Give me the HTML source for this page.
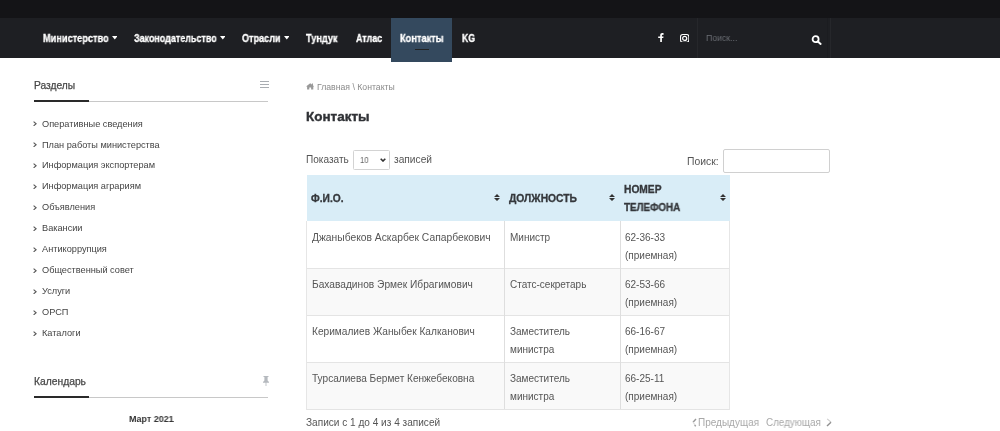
<!DOCTYPE html>
<html><head><meta charset="utf-8">
<style>
html,body{margin:0;padding:0;background:#fff;width:1000px;height:431px;overflow:hidden;position:relative;font-family:"Liberation Sans",sans-serif;}
.r{position:absolute;}
.t{position:absolute;white-space:nowrap;transform-origin:0 0;will-change:transform;}
</style></head><body>
<div class="r" style="left:0px;top:0px;width:1000px;height:18px;background:#141417;"></div>
<div class="r" style="left:0px;top:18px;width:1000px;height:40px;background:#1e1f23;"></div>
<div class="r" style="left:391px;top:18px;width:61px;height:44px;background:#34495e;"></div>
<div class="r" style="left:415px;top:49px;width:14px;height:1px;background:#222;"></div>
<div class="r" style="left:697px;top:18px;width:1px;height:40px;background:#26272b;"></div>
<div class="r" style="left:830px;top:18px;width:1px;height:40px;background:#26272b;"></div>
<div class="t" style="transform:scaleX(0.9203);left:42.90px;top:33.83px;font-size:10px;line-height:10px;color:#fff;font-weight:700;-webkit-text-stroke:0.3px #fff;">Министерство</div>
<svg class="r" style="left:111.6px;top:36.3px" width="5.6" height="3.4" viewBox="0 0 5.6 3.4"><path d="M0 0 H5.6 L2.8 3.4 Z" fill="#fff"/></svg>
<div class="t" style="transform:scaleX(0.8951);left:134.00px;top:33.83px;font-size:10px;line-height:10px;color:#fff;font-weight:700;-webkit-text-stroke:0.3px #fff;">Законодательство</div>
<svg class="r" style="left:219.6px;top:36.3px" width="5.6" height="3.4" viewBox="0 0 5.6 3.4"><path d="M0 0 H5.6 L2.8 3.4 Z" fill="#fff"/></svg>
<div class="t" style="transform:scaleX(0.9076);left:242.00px;top:33.83px;font-size:10px;line-height:10px;color:#fff;font-weight:700;-webkit-text-stroke:0.3px #fff;">Отрасли</div>
<svg class="r" style="left:283.5px;top:36.3px" width="5.6" height="3.4" viewBox="0 0 5.6 3.4"><path d="M0 0 H5.6 L2.8 3.4 Z" fill="#fff"/></svg>
<div class="t" style="transform:scaleX(0.9193);left:306.20px;top:33.83px;font-size:10px;line-height:10px;color:#fff;font-weight:700;-webkit-text-stroke:0.3px #fff;">Тундук</div>
<div class="t" style="transform:scaleX(0.8929);left:356.20px;top:33.83px;font-size:10px;line-height:10px;color:#fff;font-weight:700;-webkit-text-stroke:0.3px #fff;">Атлас</div>
<div class="t" style="transform:scaleX(0.9246);left:400.20px;top:33.83px;font-size:10px;line-height:10px;color:#fff;font-weight:700;-webkit-text-stroke:0.3px #fff;">Контакты</div>
<div class="t" style="transform:scaleX(0.8667);left:461.60px;top:33.83px;font-size:10px;line-height:10px;color:#fff;font-weight:700;-webkit-text-stroke:0.3px #fff;">KG</div>
<div class="t" style="transform:scaleX(0.9645);left:706.00px;top:34.38px;font-size:9px;line-height:9px;color:#6b6e74;font-weight:400;">Поиск...</div>
<div class="t" style="transform:scaleX(1.0236);left:33.50px;top:80.63px;font-size:10px;line-height:10px;color:#484848;font-weight:400;-webkit-text-stroke:0.25px #484848;">Разделы</div>
<div class="r" style="left:34px;top:100px;width:55px;height:2px;background:#2a2a2a;"></div>
<div class="r" style="left:89px;top:101px;width:179px;height:1px;background:#c8c8c8;"></div>
<div class="r" style="left:260px;top:81.0px;width:9px;height:1.4px;background:#a9adb2;"></div>
<div class="r" style="left:260px;top:84.0px;width:9px;height:1.4px;background:#a9adb2;"></div>
<div class="r" style="left:260px;top:87.0px;width:9px;height:1.4px;background:#a9adb2;"></div>
<div class="t" style="left:41.50px;top:119.51px;font-size:9.2px;line-height:9.2px;color:#444;font-weight:400;">Оперативные сведения</div>
<svg class="r" style="left:33.4px;top:120.80px" width="4" height="5.5" viewBox="0 0 4 5.5"><path d="M0.6 0.6 L3.1 2.75 L0.6 4.9" fill="none" stroke="#555" stroke-width="1.1"/></svg>
<div class="t" style="left:41.50px;top:140.50px;font-size:9.2px;line-height:9.2px;color:#444;font-weight:400;">План работы министерства</div>
<svg class="r" style="left:33.4px;top:141.79px" width="4" height="5.5" viewBox="0 0 4 5.5"><path d="M0.6 0.6 L3.1 2.75 L0.6 4.9" fill="none" stroke="#555" stroke-width="1.1"/></svg>
<div class="t" style="left:41.50px;top:161.49px;font-size:9.2px;line-height:9.2px;color:#444;font-weight:400;">Информация экспортерам</div>
<svg class="r" style="left:33.4px;top:162.78px" width="4" height="5.5" viewBox="0 0 4 5.5"><path d="M0.6 0.6 L3.1 2.75 L0.6 4.9" fill="none" stroke="#555" stroke-width="1.1"/></svg>
<div class="t" style="left:41.50px;top:182.48px;font-size:9.2px;line-height:9.2px;color:#444;font-weight:400;">Информация аграриям</div>
<svg class="r" style="left:33.4px;top:183.77px" width="4" height="5.5" viewBox="0 0 4 5.5"><path d="M0.6 0.6 L3.1 2.75 L0.6 4.9" fill="none" stroke="#555" stroke-width="1.1"/></svg>
<div class="t" style="left:41.50px;top:203.47px;font-size:9.2px;line-height:9.2px;color:#444;font-weight:400;">Объявления</div>
<svg class="r" style="left:33.4px;top:204.76px" width="4" height="5.5" viewBox="0 0 4 5.5"><path d="M0.6 0.6 L3.1 2.75 L0.6 4.9" fill="none" stroke="#555" stroke-width="1.1"/></svg>
<div class="t" style="left:41.50px;top:224.46px;font-size:9.2px;line-height:9.2px;color:#444;font-weight:400;">Вакансии</div>
<svg class="r" style="left:33.4px;top:225.75px" width="4" height="5.5" viewBox="0 0 4 5.5"><path d="M0.6 0.6 L3.1 2.75 L0.6 4.9" fill="none" stroke="#555" stroke-width="1.1"/></svg>
<div class="t" style="left:41.50px;top:245.45px;font-size:9.2px;line-height:9.2px;color:#444;font-weight:400;">Антикоррупция</div>
<svg class="r" style="left:33.4px;top:246.74px" width="4" height="5.5" viewBox="0 0 4 5.5"><path d="M0.6 0.6 L3.1 2.75 L0.6 4.9" fill="none" stroke="#555" stroke-width="1.1"/></svg>
<div class="t" style="left:41.50px;top:266.44px;font-size:9.2px;line-height:9.2px;color:#444;font-weight:400;">Общественный совет</div>
<svg class="r" style="left:33.4px;top:267.73px" width="4" height="5.5" viewBox="0 0 4 5.5"><path d="M0.6 0.6 L3.1 2.75 L0.6 4.9" fill="none" stroke="#555" stroke-width="1.1"/></svg>
<div class="t" style="left:41.50px;top:287.43px;font-size:9.2px;line-height:9.2px;color:#444;font-weight:400;">Услуги</div>
<svg class="r" style="left:33.4px;top:288.72px" width="4" height="5.5" viewBox="0 0 4 5.5"><path d="M0.6 0.6 L3.1 2.75 L0.6 4.9" fill="none" stroke="#555" stroke-width="1.1"/></svg>
<div class="t" style="left:41.50px;top:308.42px;font-size:9.2px;line-height:9.2px;color:#444;font-weight:400;">ОРСП</div>
<svg class="r" style="left:33.4px;top:309.71px" width="4" height="5.5" viewBox="0 0 4 5.5"><path d="M0.6 0.6 L3.1 2.75 L0.6 4.9" fill="none" stroke="#555" stroke-width="1.1"/></svg>
<div class="t" style="left:41.50px;top:329.41px;font-size:9.2px;line-height:9.2px;color:#444;font-weight:400;">Каталоги</div>
<svg class="r" style="left:33.4px;top:330.70px" width="4" height="5.5" viewBox="0 0 4 5.5"><path d="M0.6 0.6 L3.1 2.75 L0.6 4.9" fill="none" stroke="#555" stroke-width="1.1"/></svg>
<div class="t" style="transform:scaleX(1.0300);left:33.50px;top:377.04px;font-size:10px;line-height:10px;color:#484848;font-weight:400;-webkit-text-stroke:0.25px #484848;">Календарь</div>
<div class="r" style="left:34px;top:395.5px;width:54.5px;height:2.0px;background:#2a2a2a;"></div>
<div class="r" style="left:88.5px;top:396.5px;width:179.5px;height:1.0px;background:#c8c8c8;"></div>
<svg class="r" style="left:262px;top:376px" width="8" height="10" viewBox="0 0 8 10"><path d="M1.5 0 H6.5 V1 H5.6 V4.5 L7 6 V6.8 H4.4 V10 H3.6 V6.8 H1 V6 L2.4 4.5 V1 H1.5 Z" fill="#b5b9be"/></svg>
<div class="t" style="transform:scaleX(0.9906);left:128.50px;top:414.88px;font-size:9px;line-height:9px;color:#333;font-weight:700;">Март 2021</div>
<svg class="r" style="left:305.9px;top:83.1px" width="8.4" height="6.6" viewBox="0 0 8.4 6.6"><path d="M4.2 0.2 L8.4 3.6 H7.3 V6.6 H5.1 V4.5 H3.3 V6.6 H1.1 V3.6 H0 Z M5.9 0.6 H7 V2.4 L5.9 1.5 Z" fill="#999"/></svg>
<div class="t" style="transform:scaleX(1.0216);left:316.50px;top:82.50px;font-size:8.5px;line-height:8.5px;color:#8a8a8a;font-weight:400;">Главная \ Контакты</div>
<div class="t" style="transform:scaleX(1.1238);left:306.40px;top:110.54px;font-size:12px;line-height:12px;color:#303236;font-weight:700;-webkit-text-stroke:0.35px #303236;">Контакты</div>
<div class="t" style="transform:scaleX(1.0067);left:306.10px;top:154.73px;font-size:10px;line-height:10px;color:#555;font-weight:400;">Показать</div>
<div class="r" style="left:353px;top:149.5px;width:35px;height:18px;border:1px solid #d3d3d3;border-radius:1.5px;background:#fff;"></div>
<div class="t" style="transform:scaleX(0.9083);left:360.30px;top:156.00px;font-size:8.5px;line-height:8.5px;color:#666;font-weight:400;">10</div>
<svg class="r" style="left:380px;top:157.5px" width="6" height="4" viewBox="0 0 6 4"><path d="M0.7 0.7 L3 3 L5.3 0.7" fill="none" stroke="#333" stroke-width="1.6"/></svg>
<div class="t" style="transform:scaleX(1.0189);left:393.60px;top:154.73px;font-size:10px;line-height:10px;color:#555;font-weight:400;">записей</div>
<div class="t" style="transform:scaleX(1.0361);left:687.10px;top:156.84px;font-size:10px;line-height:10px;color:#555;font-weight:400;">Поиск:</div>
<div class="r" style="left:722.5px;top:149.3px;width:105.5px;height:22px;border:1px solid #d0d0d0;border-radius:2px;background:#fff;"></div>
<div class="r" style="left:306.5px;top:175px;width:423.5px;height:46px;background:#d9edf7;"></div>
<div class="t" style="transform:scaleX(1.0206);left:311.30px;top:194.03px;font-size:10px;line-height:10px;color:#35383c;font-weight:700;-webkit-text-stroke:0.3px #35383c;">Ф.И.О.</div>
<div class="t" style="transform:scaleX(1.0305);left:508.90px;top:194.03px;font-size:10px;line-height:10px;color:#35383c;font-weight:700;-webkit-text-stroke:0.3px #35383c;">ДОЛЖНОСТЬ</div>
<div class="t" style="transform:scaleX(1.0226);left:624.10px;top:185.03px;font-size:10px;line-height:10px;color:#35383c;font-weight:700;-webkit-text-stroke:0.3px #35383c;">НОМЕР</div>
<div class="t" style="transform:scaleX(0.9837);left:624.10px;top:203.03px;font-size:10px;line-height:10px;color:#35383c;font-weight:700;-webkit-text-stroke:0.3px #35383c;">ТЕЛЕФОНА</div>
<svg class="r" style="left:494px;top:194.3px" width="6" height="7" viewBox="0 0 6 7"><path d="M0 3 L3 0 L6 3 Z M0 4 L3 7 L6 4 Z" fill="#333"/></svg>
<svg class="r" style="left:609px;top:194.3px" width="6" height="7" viewBox="0 0 6 7"><path d="M0 3 L3 0 L6 3 Z M0 4 L3 7 L6 4 Z" fill="#333"/></svg>
<svg class="r" style="left:719.5px;top:194.3px" width="6" height="7" viewBox="0 0 6 7"><path d="M0 3 L3 0 L6 3 Z M0 4 L3 7 L6 4 Z" fill="#333"/></svg>
<div class="r" style="left:306.5px;top:221px;width:423.5px;height:47px;background:#fff;"></div>
<div class="t" style="transform:scaleX(1.0291);left:312.00px;top:232.84px;font-size:10px;line-height:10px;color:#555;font-weight:400;">Джаныбеков Аскарбек Сапарбекович</div>
<div class="t" style="left:509.80px;top:232.84px;font-size:10px;line-height:10px;color:#555;font-weight:400;">Министр</div>
<div class="t" style="left:624.60px;top:232.84px;font-size:10px;line-height:10px;color:#555;font-weight:400;">62-36-33</div>
<div class="t" style="left:624.60px;top:250.84px;font-size:10px;line-height:10px;color:#555;font-weight:400;">(приемная)</div>
<div class="r" style="left:306.5px;top:268px;width:423.5px;height:47px;background:#f9f9f9;"></div>
<div class="t" style="transform:scaleX(1.0178);left:312.00px;top:279.84px;font-size:10px;line-height:10px;color:#555;font-weight:400;">Бахавадинов Эрмек Ибрагимович</div>
<div class="t" style="left:509.80px;top:279.84px;font-size:10px;line-height:10px;color:#555;font-weight:400;">Статс-секретарь</div>
<div class="t" style="left:624.60px;top:279.84px;font-size:10px;line-height:10px;color:#555;font-weight:400;">62-53-66</div>
<div class="t" style="left:624.60px;top:297.84px;font-size:10px;line-height:10px;color:#555;font-weight:400;">(приемная)</div>
<div class="r" style="left:306.5px;top:315px;width:423.5px;height:47px;background:#fff;"></div>
<div class="t" style="transform:scaleX(1.0139);left:312.00px;top:326.84px;font-size:10px;line-height:10px;color:#555;font-weight:400;">Керималиев Жаныбек Калканович</div>
<div class="t" style="left:509.80px;top:326.84px;font-size:10px;line-height:10px;color:#555;font-weight:400;">Заместитель</div>
<div class="t" style="left:509.80px;top:344.84px;font-size:10px;line-height:10px;color:#555;font-weight:400;">министра</div>
<div class="t" style="left:624.60px;top:326.84px;font-size:10px;line-height:10px;color:#555;font-weight:400;">66-16-67</div>
<div class="t" style="left:624.60px;top:344.84px;font-size:10px;line-height:10px;color:#555;font-weight:400;">(приемная)</div>
<div class="r" style="left:306.5px;top:362px;width:423.5px;height:47px;background:#f9f9f9;"></div>
<div class="t" style="transform:scaleX(1.0087);left:312.00px;top:373.84px;font-size:10px;line-height:10px;color:#555;font-weight:400;">Турсалиева Бермет Кенжебековна</div>
<div class="t" style="left:509.80px;top:373.84px;font-size:10px;line-height:10px;color:#555;font-weight:400;">Заместитель</div>
<div class="t" style="left:509.80px;top:391.84px;font-size:10px;line-height:10px;color:#555;font-weight:400;">министра</div>
<div class="t" style="left:624.60px;top:373.84px;font-size:10px;line-height:10px;color:#555;font-weight:400;">66-25-11</div>
<div class="t" style="left:624.60px;top:391.84px;font-size:10px;line-height:10px;color:#555;font-weight:400;">(приемная)</div>
<div class="r" style="left:306px;top:268px;width:424px;height:1px;background:#e4e4e4;"></div>
<div class="r" style="left:306px;top:315px;width:424px;height:1px;background:#e4e4e4;"></div>
<div class="r" style="left:306px;top:362px;width:424px;height:1px;background:#e4e4e4;"></div>
<div class="r" style="left:306px;top:409px;width:424px;height:1px;background:#e4e4e4;"></div>
<div class="r" style="left:504px;top:221px;width:1px;height:188px;background:#dedede;"></div>
<div class="r" style="left:619.5px;top:221px;width:1.0px;height:188px;background:#dedede;"></div>
<div class="r" style="left:306px;top:221px;width:1px;height:189px;background:#e6e6e6;"></div>
<div class="r" style="left:729px;top:221px;width:1px;height:189px;background:#e6e6e6;"></div>
<div class="t" style="transform:scaleX(1.0069);left:305.70px;top:417.84px;font-size:10px;line-height:10px;color:#555;font-weight:400;">Записи с 1 до 4 из 4 записей</div>
<div class="t" style="transform:scaleX(0.9974);left:698.30px;top:417.84px;font-size:10px;line-height:10px;color:#a8a8a8;font-weight:400;">Предыдущая</div>
<div class="t" style="transform:scaleX(0.9797);left:765.80px;top:417.84px;font-size:10px;line-height:10px;color:#a8a8a8;font-weight:400;">Следующая</div>
<svg class="r" style="left:691.5px;top:417.5px" width="5" height="9" viewBox="0 0 5 9"><path d="M4 1 L1 4.2" fill="none" stroke="#999" stroke-width="1.4"/><path d="M1 4.2 L3.5 7.6" fill="none" stroke="#ddd" stroke-width="1.1"/><path d="M2.6 7.2 L3.8 8.2" fill="none" stroke="#999" stroke-width="1.4"/></svg>
<svg class="r" style="left:825.5px;top:417.5px" width="6" height="9" viewBox="0 0 6 9"><path d="M1.2 0.8 L5 4.2" fill="none" stroke="#ccc" stroke-width="1.1"/><path d="M5 4.2 L1 8" fill="none" stroke="#8f8f8f" stroke-width="1.4"/></svg>
<svg class="r" style="left:658px;top:33px" width="6" height="9" viewBox="0 0 6 9"><path d="M3.9 9 V5 H5.3 L5.5 3.5 H3.9 V2.6 C3.9 2.1 4.1 1.8 4.7 1.8 H5.6 V0.2 C5.3 0.1 4.8 0 4.3 0 C3 0 2.2 0.8 2.2 2.2 V3.5 H0.2 V5 H2.2 V9 Z" fill="#fff"/></svg>
<svg class="r" style="left:680px;top:33.6px" width="9.4" height="8.8" viewBox="0 0 9.4 8.8"><rect x="0.55" y="0.55" width="8.3" height="7.7" rx="2.2" fill="none" stroke="#fff" stroke-width="1.1"/><circle cx="4.7" cy="4.4" r="2.05" fill="none" stroke="#fff" stroke-width="1.2"/></svg>
<svg class="r" style="left:810.9px;top:35px" width="12" height="10" viewBox="0 0 12 10"><circle cx="4.6" cy="4.2" r="3.0" fill="none" stroke="#fff" stroke-width="1.8"/><path d="M6.9 6.5 L9.6 8.9" stroke="#fff" stroke-width="2" stroke-linecap="round"/></svg>
<div class="r" style="left:826.5px;top:18px;width:1.0px;height:40px;background:#1b1c20;"></div>

</body></html>
